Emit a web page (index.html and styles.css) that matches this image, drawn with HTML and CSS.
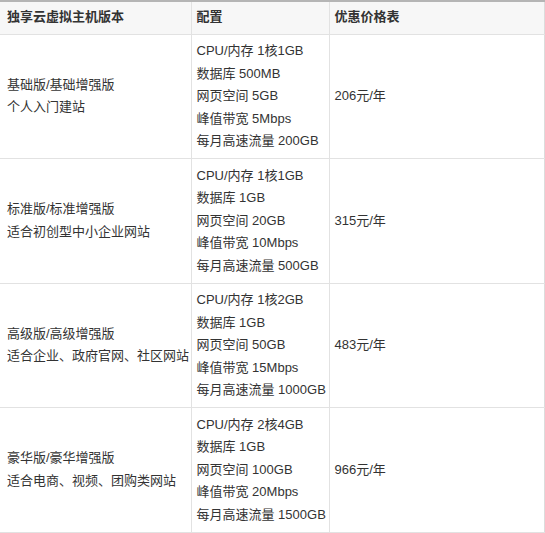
FILE: index.html
```html
<!DOCTYPE html>
<html lang="zh-CN">
<head>
<meta charset="utf-8">
<link rel="stylesheet" href="styles.css">
</head>
<body>
<table class="price-table">
  <colgroup>
    <col class="c1"><col class="c2"><col class="c3">
  </colgroup>
  <thead>
    <tr><th>独享云虚拟主机版本</th><th>配置</th><th>优惠价格表</th></tr>
  </thead>
  <tbody>
    <tr>
      <td>基础版/基础增强版<br>个人入门建站</td>
      <td>CPU/内存 1核1GB<br>数据库 500MB<br>网页空间 5GB<br>峰值带宽 5Mbps<br>每月高速流量 200GB</td>
      <td>206元/年</td>
    </tr>
    <tr>
      <td>标准版/标准增强版<br>适合初创型中小企业网站</td>
      <td>CPU/内存 1核1GB<br>数据库 1GB<br>网页空间 20GB<br>峰值带宽 10Mbps<br>每月高速流量 500GB</td>
      <td>315元/年</td>
    </tr>
    <tr>
      <td>高级版/高级增强版<br>适合企业、政府官网、社区网站</td>
      <td>CPU/内存 1核2GB<br>数据库 1GB<br>网页空间 50GB<br>峰值带宽 15Mbps<br>每月高速流量 1000GB</td>
      <td>483元/年</td>
    </tr>
    <tr>
      <td>豪华版/豪华增强版<br>适合电商、视频、团购类网站</td>
      <td>CPU/内存 2核4GB<br>数据库 1GB<br>网页空间 100GB<br>峰值带宽 20Mbps<br>每月高速流量 1500GB</td>
      <td>966元/年</td>
    </tr>
  </tbody>
</table>
</body>
</html>
```

FILE: styles.css
```css
html, body {
  margin: 0;
  padding: 0;
  background: #fff;
}
.price-table {
  width: 544px;
  border-collapse: collapse;
  table-layout: fixed;
  font-family: "Liberation Sans", "Noto Sans CJK SC", sans-serif;
  font-size: 13px;
  color: #333;
  border-top: 2px solid #b5b5b5;
}
.c1 { width: 191px; }
.c2 { width: 138px; }
.c3 { width: 215px; }
.price-table th,
.price-table td {
  border: 1px solid #e2e2e2;
  text-align: left;
  vertical-align: middle;
  line-height: 22.5px;
  white-space: nowrap;
  overflow: visible;
}
.price-table th {
  background: #f7f7f7;
  font-weight: bold;
  padding: 4px 2px 5px 5px;
  border-top: none;
}
.price-table td {
  padding: 5.5px 2px 5.5px 5px;
}
.price-table tr > :first-child {
  border-left: none;
  padding-left: 7px;
}
.price-table tr > :last-child {
  border-right: 1px solid #dcdcdc;
}
```
